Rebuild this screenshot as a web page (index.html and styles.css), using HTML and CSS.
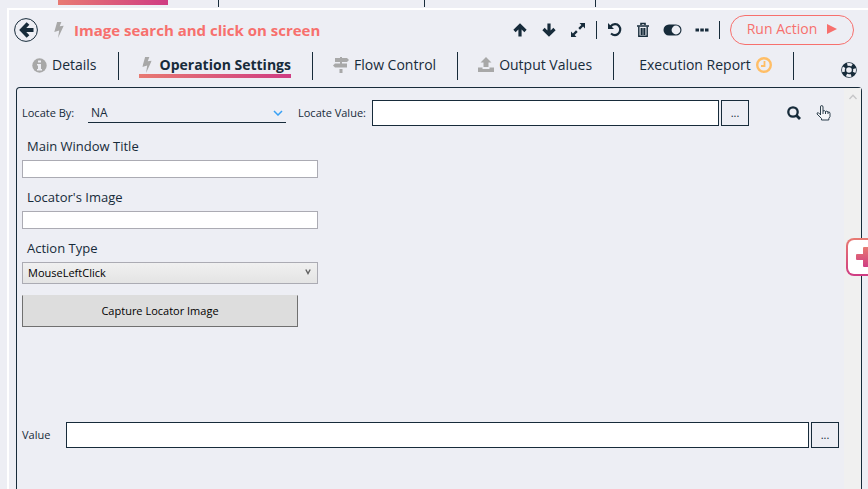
FILE: index.html
```html
<!DOCTYPE html>
<html lang="en">
<head>
<meta charset="utf-8">
<title>Image search and click on screen</title>
<link rel="stylesheet" href="styles.css">
</head>
<body>
<svg class="defs" aria-hidden="true">
  <defs>
    <linearGradient id="accent" x1="0" y1="0" x2="0" y2="1"><stop offset="0" stop-color="#e87a72"/><stop offset="1" stop-color="#cf3c83"/></linearGradient>
    <symbol id="bolt" viewBox="0 0 10 17"><path d="M3 0h4.500L5.800 4.600 10 4 4 17 5.200 9 0 10.500z"/></symbol>
  </defs>
</svg>
<div class="strip"><span class="strip-cell"><span class="strip-active"></span></span><span class="strip-cell second"></span><span class="strip-cell third"></span></div>
<main class="pane">
  <header class="header">
    <button class="back" aria-label="Back"><svg width="24" height="24" viewBox="0 0 24 24"><circle cx="12" cy="12" r="11.400" fill="none" stroke="#172b3a"/><path d="M19.500 12H9M14 5.500 7.800 12l6.200 6.500" fill="none" stroke="#172b3a" stroke-width="3.800"/></svg></button>
    <svg class="bolt" width="10" height="16"><use href="#bolt"/></svg>
    <h1>Image search and click on screen</h1>
    <div class="tools">
      <button aria-label="Move up"><svg width="16" height="16" viewBox="0 0 16 16"><path d="M8 14.500V4M2.500 9 8 3.500 13.500 9" fill="none" stroke="#172b3a" stroke-width="3.200"/></svg></button>
      <button aria-label="Move down"><svg width="16" height="16" viewBox="0 0 16 16"><path d="M8 1.500V12M2.500 7 8 12.500 13.500 7" fill="none" stroke="#172b3a" stroke-width="3.200"/></svg></button>
      <button aria-label="Expand"><svg width="16" height="16" viewBox="0 0 16 16"><path d="M9.500 1H15v5.500l-1.900-1.900L10 7.700 8.300 6l3.100-3.100zM1 9.500l1.900 1.900L6 8.300 7.700 10l-3.100 3.100L6.500 15H1z"/></svg></button>
    </div>
    <span class="rule"></span>
    <div class="tools">
      <button aria-label="Reset"><svg width="16" height="16" viewBox="0 0 16 16"><path d="M3.500 4.500C6 1.500 10 1.500 12 4c2 2.500 1.500 6-1 8-2 1.500-5 1.200-7-.5" fill="none" stroke="#172b3a" stroke-width="2.200"/><path d="M1 1v6h6z"/></svg></button>
      <button aria-label="Delete"><svg width="14" height="16" viewBox="0 0 14 16"><path d="M5 3V1.500h4V3M1 4h12" fill="none" stroke="#172b3a" stroke-width="1.600"/><path d="M2.800 4.500v9.700h8.400V4.500M5.300 6v7M8.700 6v7M7 6v7" fill="none" stroke="#172b3a" stroke-width="1.400"/></svg></button>
      <button aria-label="Enable"><svg width="19" height="16" viewBox="0 0 19 16"><rect x=".5" y="2.500" width="18" height="11" rx="5.500"/><circle cx="13" cy="8" r="4.400" fill="#edeef4"/></svg></button>
      <button aria-label="More"><svg width="14" height="16" viewBox="0 0 14 16"><path d="M.5 6.500h3.500v3H.5zM5.300 6.500h3.500v3H5.300zM10 6.500h3.500v3H10z"/></svg></button>
    </div>
    <span class="rule"></span>
    <button class="run">Run Action<svg width="10" height="10" viewBox="0 0 10 10"><path d="M0 0l10 5-10 5z"/></svg></button>
  </header>

  <div class="tabbar">
    <nav class="tabs">
      <a class="tab" href="#"><span class="tab-label"><svg width="15" height="15" viewBox="0 0 15 15"><circle cx="7.500" cy="7.500" r="7.200"/><path d="M6 2.500h3v2H6zM5 6h4v5h1v1.500H5V11h1V7.500H5z" fill="#edeef4"/></svg>Details</span></a>
      <a class="tab active" href="#"><span class="tab-label"><svg width="16" height="16" viewBox="-3 0 16 17"><use href="#bolt" width="10" height="17"/></svg>Operation Settings</span></a>
      <a class="tab" href="#"><span class="tab-label"><svg width="16" height="16" viewBox="0 0 16 16"><path d="M7 0h2v1h5l2 2-2 2H2V1h5zM7 5h2v1.500h5v4H2l-2-2 2-2h5zM6.500 12h3v4h-3z"/></svg>Flow Control</span></a>
      <a class="tab" href="#"><span class="tab-label"><svg width="16" height="16" viewBox="0 0 16 16"><path d="M8 0l5.500 5.500H10.500V10H5.500V5.500H2.500zM0 10.500h4.500v1.500h7v-1.500H16V15H0z"/></svg>Output Values</span></a>
      <a class="tab report" href="#"><span class="tab-label">Execution Report<svg class="clock" width="16" height="16" viewBox="0 0 16 16"><circle cx="8" cy="8" r="6.800" fill="none" stroke="#ffbe66" stroke-width="2.400"/><path d="M8.500 4v5H5" fill="none" stroke="#ffbe66" stroke-width="1.800"/></svg></span></a>
    </nav>
    <button class="help" aria-label="Help"><svg width="16" height="16" viewBox="0 0 16 16"><circle cx="8" cy="8" r="5.300" fill="none" stroke="#172b3a" stroke-width="5"/><circle cx="8" cy="8" r="5.600" fill="none" stroke="#edeef4" stroke-width="2.800" stroke-dasharray="4.800 4" stroke-dashoffset="2.400"/></svg></button>
  </div>

  <section class="panel">
    <div class="content">
      <div class="row locate">
        <label class="by" for="by">Locate By:</label>
        <span class="select line"><select id="by"><option>NA</option></select><svg width="10" height="6" viewBox="0 0 10 6"><path d="M1 1l4 4 4-4" fill="none" stroke="#38a0f4" stroke-width="1.500"/></svg></span>
        <label class="lv" for="lv">Locate Value:</label>
        <input class="box" id="lv" type="text">
        <button class="dots">...</button>
        <div class="finders">
          <button aria-label="Search"><svg width="14" height="14" viewBox="0 0 14 14"><circle cx="6" cy="6" r="4.700" fill="none" stroke="#172b3a" stroke-width="2.300"/><path d="M9 9l4 4" stroke="#172b3a" stroke-width="2.800"/></svg></button>
          <button aria-label="Pick element"><svg width="15" height="16" viewBox="0 0 15 16"><path d="M4.500 10V2q0-1.500 1.200-1.500T7 2v4q1.500-1 2.500.5 1.500-1 2.500.5 2-.5 2 1.500v3l-1.200 2V15H5.500v-1.500L1 9q0-1.800 1.500-1.200l2 2M7 6v3M9.500 6.500V9M12 7v2" fill="#f5f5f8" stroke="#172b3a" stroke-width=".9"/></svg></button>
        </div>
      </div>
      <div class="fields">
        <label for="title">Main Window Title</label>
        <input id="title" type="text">
        <label for="image">Locator's Image</label>
        <input id="image" type="text">
        <label for="action">Action Type</label>
        <span class="select gray"><select id="action"><option>MouseLeftClick</option></select><svg width="6" height="6" viewBox="0 0 6 6"><path d="M.8.500 3 4.500 5.200.5" fill="none" stroke="#606060" stroke-width="1.400"/></svg></span>
        <button class="capture">Capture Locator Image</button>
      </div>
      <div class="row value">
        <label for="value">Value</label>
        <input class="box" id="value" type="text">
        <button class="dots">...</button>
      </div>
    </div>
    <div class="scroll"><svg width="8" height="6" viewBox="0 0 8 6"><path d="M.5 5 4 1.200 7.500 5" fill="none" stroke="#c6c6c8" stroke-width="1.300"/></svg></div>
  </section>
  <button class="add" aria-label="Add"><svg width="20" height="20" viewBox="0 0 20 20"><path d="M7 1q0-1 1-1h4q1 0 1 1v6h6q1 0 1 1v4q0 1-1 1h-6v6q0 1-1 1H8q-1 0-1-1v-6H1q-1 0-1-1V8q0-1 1-1h6z" fill="url(#accent)"/></svg></button>
</main>
</body>
</html>
```

FILE: styles.css
```css
* { box-sizing: border-box; }
body {
  margin: 0;
  min-height: 100vh;
  display: flex;
  flex-direction: column;
  overflow: hidden;
  background: #edeef4;
  color: #172b3a;
  font: 11px/16px "Open Sans", "Noto Sans", sans-serif;
}
svg { display: block; fill: #172b3a; flex: none; }
button, input, select { font: inherit; color: inherit; margin: 0; border-radius: 0; }
button { padding: 0; border: 0; background: none; }
h1 { margin: 0; }
.defs { position: absolute; width: 0; height: 0; }

.strip { display: flex; height: 8px; }
.strip-cell { width: 219px; height: 7px; border-right: 1px solid #172b3a; }
.strip-cell.second { width: 206px; }
.strip-cell.third { width: 171px; }
.strip-active { display: block; height: 5px; margin: 0 50px 0 58px; background: linear-gradient(90deg, #e87a72, #cf3c83); }

.pane {
  position: relative;
  flex: 1;
  display: flex;
  flex-direction: column;
  margin-left: 7px;
  border: solid #fff;
  border-width: 2px 0 0 2px;
}
.header { display: flex; align-items: center; height: 40px; padding: 0 14px 0 5px; }
.bolt { margin-left: 16px; fill: #a8a8a8; }
h1 { margin-left: 10px; font-size: 15px; line-height: 20px; color: #f7706d; white-space: nowrap; }
.tools { display: flex; align-items: center; gap: 13px; }
h1 + .tools { margin-left: auto; }
.rule { width: 1px; height: 18px; margin: 0 10px; background: #172b3a; }
.run {
  display: flex;
  align-items: center;
  justify-content: center;
  gap: 10px;
  width: 124px;
  height: 30px;
  padding-bottom: 2px;
  border: 1px solid #f7706d;
  border-radius: 15px;
  font-size: 14px;
  color: #f7706d;
}
.run svg { fill: #f7706d; }

.tabbar { display: flex; height: 37px; padding-right: 11px; }
.tabs { display: flex; flex: 1; align-items: flex-start; padding: 2px 0 0 3px; }
.tab { height: 28px; padding: 0 21px 0 20px; border-right: 1px solid #172b3a; color: inherit; font-size: 14px; line-height: 20px; text-decoration: none; white-space: nowrap; }
.tab-label { display: flex; align-items: center; gap: 5px; height: 26px; }
.tab svg { fill: #a8a8a8; }
.tab.active { font-weight: 700; }
.active .tab-label { border-bottom: 4px solid; border-image: linear-gradient(90deg, #e87a72, #cf3c83) 1; padding-top: 4px; }
.report { padding-left: 25px; }
.help { align-self: flex-end; margin-bottom: 9px; }

.panel {
  flex: 1;
  display: flex;
  margin: 0 6px 0 7px;
  border: 1px solid #172b3a;
  border-bottom: 0;
  border-radius: 4px 4px 0 0;
}
.content { flex: 1; padding: 12px 5px 0; }
.scroll { width: 17px; padding: 6px 5px; background: #f0f0f0; }
.row { display: flex; align-items: center; height: 26px; }
.by { width: 66px; }
.lv { width: 74px; margin-left: 12px; white-space: nowrap; }
.box { flex: 1; min-width: 0; height: 26px; border: 1px solid #172b3a; background: #fff; }
.dots { width: 28px; height: 26px; margin-left: 2px; border: 1px solid #172b3a; }
.finders { display: flex; align-items: center; gap: 15px; margin: 0 8px 0 38px; }
.select { position: relative; display: block; }
.select select { appearance: none; width: 100%; background: none; border: 0; }
.select svg { position: absolute; pointer-events: none; }
.line { width: 198px; border-bottom: 1px solid #172b3a; }
.line select { height: 18px; padding: 0 3px; font-size: 12px; }
.line svg { right: 3px; top: 6px; }

.fields { display: flex; flex-direction: column; width: 296px; min-height: 296px; padding-top: 10px; }
.fields label { padding-left: 5px; margin-bottom: 4px; font-size: 13px; line-height: 20px; }
.fields input { height: 18px; margin-bottom: 9px; border: 1px solid #ababb3; background: #fff; }
.gray { height: 22px; border: 1px solid #ababb3; background: linear-gradient(#f0f0f0, #e4e4e4); color: #000; }
.gray select { height: 20px; padding: 0 5px; }
.gray svg { right: 6px; top: 6px; }
.capture { width: 276px; height: 32px; margin-top: 11px; border: 1px solid #707070; border-top-color: #ddd; background: #ddd; color: #000; }
.value label { width: 44px; }

.add {
  position: absolute;
  right: -18px;
  top: 228px;
  width: 40px;
  height: 38px;
  display: grid;
  place-items: center;
  border: 2px solid transparent;
  border-radius: 8px;
  background: linear-gradient(#fff, #fff) padding-box, linear-gradient(#e87a72, #cf3c83) border-box;
}
```
